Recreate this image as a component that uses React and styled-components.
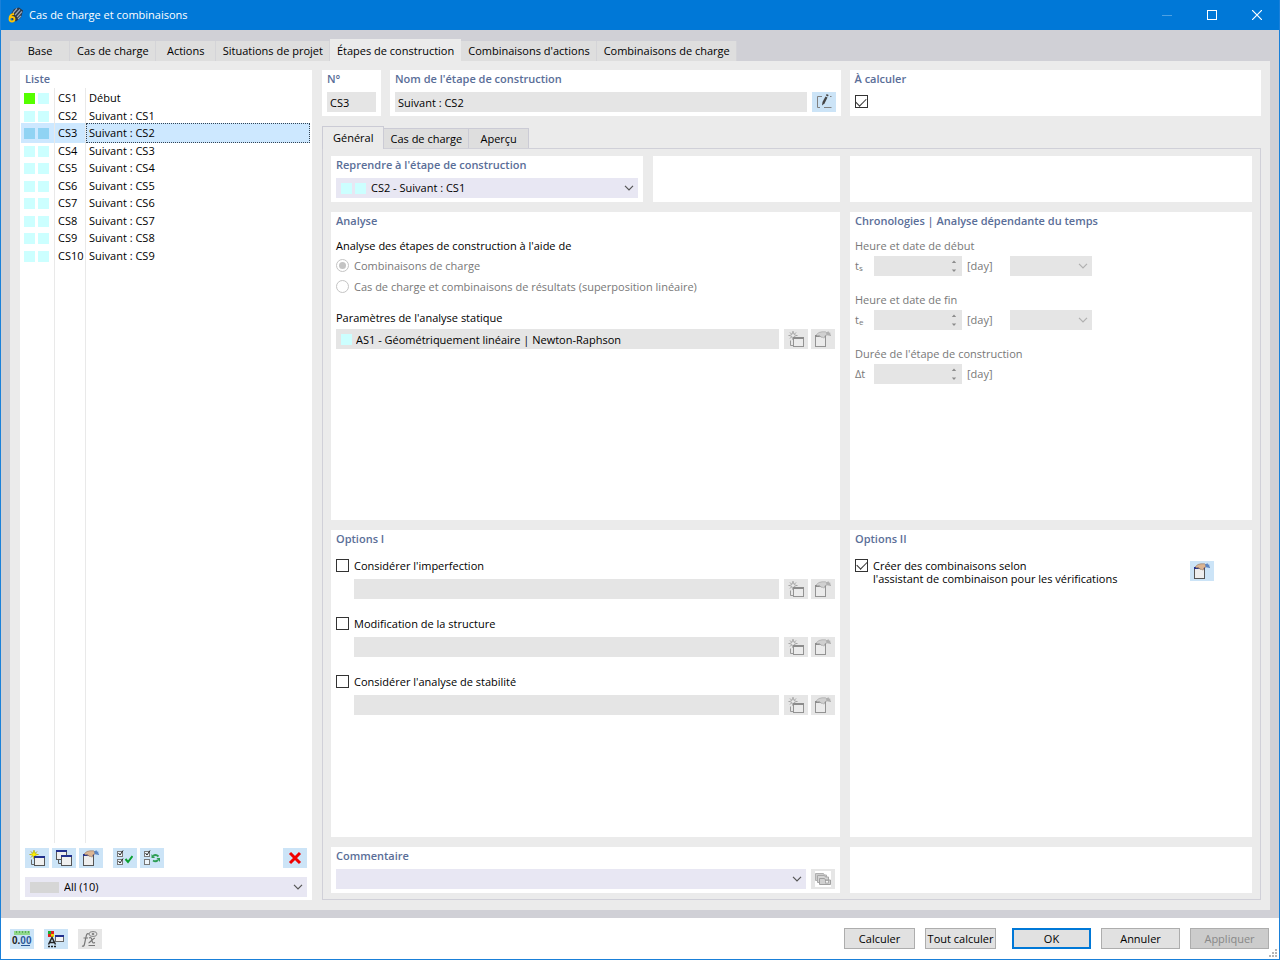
import React, { useState } from "react";
import styled, { createGlobalStyle, css } from "styled-components";

const GlobalStyle = createGlobalStyle`
  * {
    box-sizing: border-box;
  }
  body {
    margin: 0;
    font-family: "Open Sans", "Noto Sans", sans-serif;
    font-size: 11px;
    line-height: 18px;
    color: #000;
    background: #fff;
  }
  button, input, select {
    font: inherit;
    color: inherit;
    margin: 0;
  }
`;

const Window = styled.div`
  display: flex;
  flex-direction: column;
  min-height: 100vh;
  border: 1px solid #1a80d9;
  border-top: 0;
`;

const TitleBar = styled.header`
  display: flex;
  align-items: center;
  gap: 5px;
  height: 30px;
  padding-left: 7px;
  background: #0078d7;
  color: #fff;
`;

const WindowTitle = styled.h1`
  flex: 1;
  margin: 0;
  font-size: 11px;
  font-weight: 400;
`;

const WindowButtons = styled.div`
  display: flex;
`;

const WindowButton = styled.button`
  display: grid;
  place-items: center;
  width: 45px;
  height: 30px;
  padding: 0;
  border: 0;
  background: none;
  opacity: ${(props) => (props.disabled ? 0.3 : 1)};
`;

const Body = styled.main`
  flex: 1;
  display: flex;
  flex-direction: column;
  padding: 9px 9px 8px;
  background: #d0d0d6;
`;

const MainTabs = styled.nav`
  display: flex;
  align-items: flex-end;
  height: 22px;
`;

const MainTab = styled.button`
  height: ${(props) => (props.$active ? 22 : 20)}px;
  min-width: 60px;
  padding: ${(props) => (props.$active ? "2px 7px 0" : "0 7px")};
  border: 0;
  background: ${(props) => (props.$active ? "#ebebeb" : "#dedede")};
  box-shadow: ${(props) => (props.$active ? "none" : "inset -1px 0 #d4d4d8")};
  line-height: 20px;
  white-space: nowrap;
`;

const Content = styled.div`
  flex: 1;
  display: flex;
  gap: 10px;
  padding: 9px 9px 10px 10px;
  background: #ebebeb;
`;

const Card = styled.section`
  display: flex;
  flex-direction: column;
  min-width: 0;
  padding: 0 5px 4px;
  background: #fff;
`;

const Heading = styled.h2`
  margin: 0 0 ${(props) => props.$bottom ?? 4}px;
  font-size: 11px;
  line-height: 18px;
  font-weight: 600;
  color: #5a6e98;
  white-space: nowrap;
`;

const ListCard = styled(Card)`
  flex: 0 0 292px;
  padding: 0 2px 3px 1px;
`;

const ListHeading = styled(Heading)`
  margin: 0 4px;
`;

const List = styled.table`
  flex: 1;
  display: flex;
  flex-direction: column;
  border-spacing: 0;

  tbody {
    flex: 1;
    display: flex;
    flex-direction: column;
  }
`;

const ListRow = styled.tr`
  display: grid;
  grid-template-columns: 34px 31px 1fr;
  height: 18px;
  cursor: default;

  &:nth-child(even) {
    height: 17px;
  }

  td {
    display: flex;
    align-items: center;
    gap: 3px;
    padding: 0 0 0 3px;
    border-right: 1px solid #e9e9e9;
    background: ${(props) => (props.$selected ? "#cde8ff" : "none")};
    white-space: nowrap;
  }

  td:last-child {
    border: 1px dotted ${(props) => (props.$selected ? "#345" : "transparent")};
    padding-left: 2px;
  }
`;

const FillerRow = styled(ListRow)`
  flex: 1;
  &:nth-child(odd) {
    height: auto;
  }
`;

const Swatch = styled.span`
  flex: none;
  width: ${(props) => props.$width || 11}px;
  height: 11px;
  background: ${(props) => props.$color || "#ccffff"};
`;

const ListTools = styled.div`
  display: flex;
  gap: 3px;
  padding: 5px 3px 9px 4px;
`;

const ToolGap = styled.span`
  width: ${(props) => (props.$grow ? "auto" : "4px")};
  flex: ${(props) => (props.$grow ? 1 : "none")};
`;

const IconButton = styled.button`
  flex: none;
  display: grid;
  place-items: center;
  width: 24px;
  height: 20px;
  padding: 0;
  border: 0;
  background: ${(props) => (props.disabled ? "#e6e6e6" : "#cce4f7")};
`;

const SelectBox = styled.div`
  display: flex;
  align-items: center;
  gap: 3px;
  flex: ${(props) => (props.$width ? "none" : 1)};
  width: ${(props) => (props.$width ? props.$width + "px" : "auto")};
  min-width: 0;
  height: 20px;
  padding: 0 4px 0 5px;
  background: ${(props) => (props.$disabled ? "#e5e5e5" : "#e8e7f3")};

  select {
    flex: 1;
    min-width: 0;
    height: 20px;
    padding: 0 0 0 2px;
    border: 0;
    background: none;
    appearance: none;
    opacity: 1;
  }
`;

const FilterRow = styled.div`
  display: flex;
  padding: 0 3px 0 4px;
`;

const Details = styled.div`
  flex: 1;
  display: flex;
  flex-direction: column;
  min-width: 0;
`;

const Summary = styled.div`
  display: grid;
  grid-template-columns: 59px minmax(0, 450fr) minmax(0, 411fr);
  gap: 9px;
`;

const SubTabs = styled.nav`
  display: flex;
  align-items: flex-end;
  height: 22px;
  margin-top: 10px;
`;

const SubTab = styled.button`
  height: ${(props) => (props.$active ? 23 : 20)}px;
  min-width: 60px;
  padding: 0 6px;
  border: 1px solid #cbcbd5;
  border-left-width: ${(props) => (props.$active ? "1px" : "0")};
  border-bottom: 0;
  background: ${(props) => (props.$active ? "#ebebeb" : "#dedede")};
  line-height: 18px;

  ${(props) =>
    props.$active &&
    css`
      z-index: 1;
      margin-bottom: -1px;
      padding: 0 10px;
    `}
`;

const Pane = styled.div`
  flex: 1;
  display: grid;
  grid-template-columns: minmax(0, 509fr) minmax(0, 402fr);
  grid-template-rows: 46px 1fr 1fr 46px;
  gap: 10px;
  padding: 7px 8px 6px;
  border: 1px solid #d0d0d8;
`;

const SplitRow = styled.div`
  display: grid;
  grid-template-columns: minmax(0, 312fr) minmax(0, 187fr);
  gap: 10px;
`;

const Row = styled.div`
  display: flex;
  align-items: center;
  gap: 5px;
`;

const Buttons = styled(Row)`
  gap: 3px;
`;

const TextField = styled.input`
  flex: 1;
  min-width: 0;
  width: 100%;
  height: 20px;
  padding: 0 3px;
  border: 0;
  background: #e5e5e5;
`;

const FieldBox = styled.div`
  flex: 1;
  display: flex;
  align-items: center;
  gap: 1px;
  padding-left: 5px;
  background: #e5e5e5;
`;

const Label = styled.label`
  display: block;
  margin-top: ${(props) => props.$top || 0}px;
  margin-bottom: ${(props) => props.$bottom || 0}px;
  color: ${(props) => (props.$muted ? "#787878" : "inherit")};
`;

const RadioLabel = styled.label`
  display: flex;
  align-items: center;
  gap: 5px;
  height: 21px;
  color: #787878;
`;

const Radio = styled.input.attrs({ type: "radio" })`
  appearance: none;
  display: grid;
  place-items: center;
  width: 13px;
  height: 13px;
  border: 1px solid #c4c4c4;
  border-radius: 50%;

  &:checked::before {
    content: "";
    width: 7px;
    height: 7px;
    border-radius: 50%;
    background: #c4c4c4;
  }
`;

const CheckLabel = styled.label`
  display: flex;
  align-items: flex-start;
  gap: 5px;
  line-height: 13px;
  padding-top: 2px;
`;

const Checkbox = styled.input.attrs({ type: "checkbox" })`
  appearance: none;
  flex: none;
  display: grid;
  place-items: center;
  width: 13px;
  height: 13px;
  border: 1px solid #333;
  background: #fff;

  &:checked::before {
    content: "";
    width: 9px;
    height: 5px;
    border: solid #333;
    border-width: 0 0 1px 1px;
    transform: translateY(-1px) rotate(-45deg);
  }
`;

const Option = styled.div`
  padding-bottom: 16px;
`;

const OptionRow = styled(Row)`
  padding: 7px 0 0 18px;
`;

const CalcCheck = styled.div`
  padding-top: 3px;
  display: flex;
`;

const TimeRow = styled.div`
  display: grid;
  grid-template-columns: 14px 88px 38px 82px;
  align-items: center;
  gap: 5px;
  height: 20px;
  margin: 1px 0 15px;
  color: #787878;

  sub {
    font-size: 8px;
    line-height: 8px;
    vertical-align: -1px;
  }
`;

const SpinBox = styled.div`
  display: flex;
  align-items: center;
  height: 20px;
  padding-right: 5px;
  background: #e5e5e5;
`;

const WizardRow = styled.div`
  display: flex;
  align-items: center;
  justify-content: space-between;
  padding-right: 33px;
`;

const Footer = styled.footer`
  position: relative;
  display: flex;
  align-items: center;
  justify-content: space-between;
  min-height: 41px;
  padding: 0 10px 0 9px;
  background: #fff;
`;

const FooterGroup = styled.div`
  display: flex;
  align-items: center;
  gap: 10px;
`;

const PushButton = styled.button`
  width: ${(props) => (props.$small ? 71 : 79)}px;
  height: 21px;
  padding: 0;
  border: ${(props) => (props.$primary ? "2px solid #0078d7" : "1px solid #adadad")};
  background: ${(props) => (props.disabled ? "#cccccc" : "#e1e1e1")};
  color: ${(props) => (props.disabled ? "#888" : "inherit")};
  line-height: 16px;
  white-space: nowrap;
`;

const MainActions = styled(FooterGroup)`
  padding-left: 6px;
`;

const Grip = styled.svg`
  position: absolute;
  right: 2px;
  bottom: 2px;
`;

/* icons */

const Svg = ({ children, width = 16, height = 16 }) => (
  <svg width={width} height={height} viewBox={`0 0 ${width} ${height}`} fill="none" aria-hidden="true">
    {children}
  </svg>
);

const Chevron = ({ color = "#555" }) => (
  <svg width="10" height="6" viewBox="0 0 10 6" fill="none" aria-hidden="true">
    <path d="M1 .8l4 4 4-4" stroke={color} strokeWidth="1.2" />
  </svg>
);

const AppIcon = () => (
  <Svg>
    <path d="M3 7L6 2l5-1.500 4 3-2 7-5 4-4-2z" fill="#2d3746" />
    <path d="M5 6l4-4.500M7 8l5-5.500M9 10l5-5.500M10 12l3-3" stroke="#97a5b8" strokeWidth="1.2" />
    <path d="M6 7C3 7 1.500 9 1.500 12c0 1.500 1 2.500 2.500 2.500S6.500 13.500 6.500 12 5.500 10 4 10s-2.500 1-2.500 2" stroke="#ffc400" strokeWidth="1.800" />
  </Svg>
);

const NewIcon = ({ off }) => (
  <Svg>
    <path d="M5 0v9M.5 4.500h9M2 1.500l6 6M8 1.500l-6 6" stroke={off ? "#a0a0a0" : "#a79d1c"} />
    <path
      d="M5 .8l1 2.700 2.700 1L6 5.500 5 8.200 4 5.500 1.300 4.500 4 3.500z"
      fill={off ? "#ececec" : "#fff200"}
      stroke={off ? "#a0a0a0" : "#cfc400"}
      strokeWidth=".7"
    />
    <path d="M2.500 9.500v5h3" stroke={off ? "#999" : "#666"} />
    <rect x="5.500" y="6.500" width="10" height="9" fill={off ? "#ebebeb" : "#f0f0f0"} stroke={off ? "#939393" : "#555"} />
    <path d="M5 7h11" stroke={off ? "#8c8c8c" : "#22308e"} strokeWidth="2" />
  </Svg>
);

const CopyIcon = () => (
  <Svg>
    <rect x=".5" y=".5" width="10" height="9" stroke="#555" fill="#eee" />
    <path d="M0 1h11" stroke="#22308e" strokeWidth="2" />
    <path d="M2.500 10v3.500H5" stroke="#555" />
    <rect x="5.500" y="5.500" width="10" height="10" fill="#f0f0f0" stroke="#555" />
    <path d="M5 6h11" stroke="#22308e" strokeWidth="2" />
  </Svg>
);

const EditIcon = ({ off }) => (
  <Svg>
    <rect x=".5" y="4.500" width="10" height="11" fill={off ? "#ebebeb" : "#eee"} stroke={off ? "#939393" : "#555"} />
    <path d="M0 5h11" stroke={off ? "#8c8c8c" : "#22308e"} strokeWidth="2" />
    <path
      d="M1.500 3.500L4 1.500 7 .8h3.500L12 2v2l-2 .8-.5 2-1.200.2-.6-.8-1.200.3-.5-1-1.200.3-.4-1.300-2 .5z"
      fill={off ? "#d0d0d0" : "#dcb592"}
      stroke={off ? "#a0a0a0" : "#8d7460"}
      strokeWidth=".6"
    />
    <path d="M11 1.500L13.500.3 14 1.500l1.500.3-.5 1.700h1V5l-4-.7z" fill={off ? "#b0b0b0" : "#5b86c4"} />
  </Svg>
);

const SmallCheck = ({ y, ticked }) => (
  <g transform={`translate(0 ${y})`}>
    <rect x=".5" y="1.500" width="5" height="5" stroke="#777" fill="#eef6fc" />
    {ticked && <path d="M1.500 3l1.500 2L6 .5" stroke="#222" />}
  </g>
);

const CheckAllIcon = () => (
  <Svg>
    <SmallCheck y={0} ticked />
    <SmallCheck y={8} ticked />
    <path d="M8.500 9l2.500 3 4.500-6" stroke="#0aa030" strokeWidth="2" />
  </Svg>
);

const InvertIcon = () => (
  <Svg>
    <SmallCheck y={0} ticked />
    <SmallCheck y={8} />
    <path d="M9 6c2-1.500 4-1 5.500.5M14 10c-1.500 1.500-3.500 1.500-5 .5" stroke="#2f9e55" strokeWidth="1.800" />
    <path d="M7.500 4v4h3.500zM16 12V8h-3.500z" fill="#2f9e55" />
  </Svg>
);

const DeleteIcon = () => (
  <Svg>
    <path d="M3 3l10 10M13 3L3 13" stroke="#f00000" strokeWidth="3" />
  </Svg>
);

const RenameIcon = () => (
  <Svg>
    <path d="M6 2.500H1.500v11H4M8 13.500h7.500M14 2.500h1.500" stroke="#808080" />
    <path d="M6.500 8L9.500 2.500l2 1-3 6-2.500 2z" fill="#444" />
    <path d="M10 1.500l2 1 .6-1.500-2-1z" fill="#444" />
  </Svg>
);

const LibraryIcon = () => (
  <Svg>
    <rect width="16" height="16" fill="#fff" />
    <path d="M.5 9.500v-7h8l1 1.500h2v5.500z" fill="#ccc" stroke="#b0b0b0" />
    <path d="M2.500 11.500v-7h7l1 1.500h3v5.500z" fill="#d4d4d4" stroke="#a8a8a8" />
    <path d="M4.500 13.500v-6h5l1 1.500h5v4.500z" fill="#d0d0d0" stroke="#a0a0a0" />
    <rect x="10.500" y="9.500" width="3" height="2.500" fill="#f4f4f4" stroke="#999" strokeWidth=".7" />
  </Svg>
);

const UnitsIcon = () => (
  <Svg width={20} height={18}>
    <rect x="2" y="1" width="16" height="4" fill="#8fd88a" />
    <path d="M4.500 1v2M7.500 1v2M10.500 1v2M13.500 1v2M16.500 1v2" stroke="#5cab5c" />
    <text x="0" y="14" fontSize="10" fontWeight="700" fontFamily="Liberation Sans, sans-serif" fill="#222">
      0.<tspan fill="#2b5797">00</tspan>
    </text>
    <path d="M9 15.500h9" stroke="#2b5797" />
  </Svg>
);

const DisplayIcon = () => (
  <Svg width={18} height={18}>
    <rect x="1" y="1" width="3" height="3" fill="#18b030" />
    <rect x="4" y="1" width="3" height="3" fill="#e02020" />
    <rect x="1" y="4" width="3" height="3" fill="#e02020" />
    <rect x="4" y="4" width="3" height="3" fill="#f0d000" />
    <path d="M1.500 14.500L5 7.500l3.500 7M3 12.500h4" stroke="#222" strokeWidth="1.500" />
    <path d="M1 16.500h8" stroke="#222" strokeWidth="1.500" strokeDasharray="2 1" />
    <rect x="8.500" y="6.500" width="8" height="5" fill="#f4f4f4" stroke="#666" />
    <path d="M8 6h9" stroke="#22308e" strokeWidth="2" />
  </Svg>
);

const FormulaIcon = () => (
  <Svg width={18} height={18}>
    <path d="M8 4c-2-1-2.500.5-3 3L3.500 14c-.4 2-1 2.500-2.500 2M2.500 8H7" stroke="#777" strokeWidth="1.200" />
    <path d="M8 8c2-1 2.500 0 3 2.500s1 3 3 2M14 8c-2 0-5 5-6.500 5M7.500 15.500H14" stroke="#777" strokeWidth="1.200" />
    <ellipse cx="12" cy="4" rx="4" ry="2.500" stroke="#888" />
    <circle cx="12" cy="4" r="1.300" fill="#888" />
  </Svg>
);

const SpinArrows = () => (
  <Svg width={6} height={12}>
    <path d="M.8 3L3 .5 5.200 3zM.8 9.500L3 12l2.200-2.500z" fill="#8c8c8c" />
  </Svg>
);

const mainTabs = [
  "Base",
  "Cas de charge",
  "Actions",
  "Situations de projet",
  "Étapes de construction",
  "Combinaisons d'actions",
  "Combinaisons de charge",
];

const stages = Array.from({ length: 10 }, (_, i) => ({
  id: `CS${i + 1}`,
  name: i === 0 ? "Début" : `Suivant : CS${i}`,
}));

const options = ["Considérer l'imperfection", "Modification de la structure", "Considérer l'analyse de stabilité"];

const NewEditButtons = () => (
  <Buttons>
    <IconButton disabled aria-label="Nouveau">
      <NewIcon off />
    </IconButton>
    <IconButton disabled aria-label="Modifier">
      <EditIcon off />
    </IconButton>
  </Buttons>
);

function TimeField({ id, label, symbol, sub, withDate }) {
  return (
    <>
      <Label htmlFor={id} $muted>
        {label}
      </Label>
      <TimeRow>
        <span>
          {symbol}
          {sub && <sub>{sub}</sub>}
        </span>
        <SpinBox>
          <TextField id={id} disabled />
          <SpinArrows />
        </SpinBox>
        <span>[day]</span>
        {withDate && (
          <SelectBox $width={82} $disabled>
            <select disabled aria-label={label} />
            <Chevron color="#b0b0b0" />
          </SelectBox>
        )}
      </TimeRow>
    </>
  );
}

function StageList({ selected, onSelect }) {
  return (
    <ListCard>
      <ListHeading>Liste</ListHeading>
      <List>
        <tbody>
          {stages.map((stage, i) => {
            const active = i === selected;
            const color = active ? "#90d3f3" : "#ccffff";
            return (
              <ListRow key={stage.id} $selected={active} onClick={() => onSelect(i)}>
                <td>
                  <Swatch $color={i === 0 ? "#55ff00" : color} />
                  <Swatch $color={color} />
                </td>
                <td>{stage.id}</td>
                <td>{stage.name}</td>
              </ListRow>
            );
          })}
          <FillerRow>
            <td />
            <td />
            <td />
          </FillerRow>
        </tbody>
      </List>
      <ListTools>
        <IconButton aria-label="Nouveau">
          <NewIcon />
        </IconButton>
        <IconButton aria-label="Copier">
          <CopyIcon />
        </IconButton>
        <IconButton aria-label="Modifier">
          <EditIcon />
        </IconButton>
        <ToolGap />
        <IconButton aria-label="Tout sélectionner">
          <CheckAllIcon />
        </IconButton>
        <IconButton aria-label="Inverser la sélection">
          <InvertIcon />
        </IconButton>
        <ToolGap $grow />
        <IconButton aria-label="Supprimer">
          <DeleteIcon />
        </IconButton>
      </ListTools>
      <FilterRow>
        <SelectBox>
          <Swatch $width={29} $color="#d6d6d6" />
          <select aria-label="Filtre">
            <option>All (10)</option>
          </select>
          <Chevron />
        </SelectBox>
      </FilterRow>
    </ListCard>
  );
}

export default function App() {
  const [tab, setTab] = useState(4);
  const [selected, setSelected] = useState(2);
  const stage = stages[selected];

  return (
    <Window>
      <GlobalStyle />
      <TitleBar>
        <AppIcon />
        <WindowTitle>Cas de charge et combinaisons</WindowTitle>
        <WindowButtons>
          <WindowButton disabled aria-label="Réduire">
            <Svg width={10} height={10}>
              <path d="M0 5.500h10" stroke="#fff" />
            </Svg>
          </WindowButton>
          <WindowButton aria-label="Agrandir">
            <Svg width={10} height={10}>
              <rect x=".5" y=".5" width="9" height="9" stroke="#fff" />
            </Svg>
          </WindowButton>
          <WindowButton aria-label="Fermer">
            <Svg width={10} height={10}>
              <path d="M0 0l10 10M10 0L0 10" stroke="#fff" strokeWidth="1.200" />
            </Svg>
          </WindowButton>
        </WindowButtons>
      </TitleBar>

      <Body>
        <MainTabs>
          {mainTabs.map((name, i) => (
            <MainTab key={name} $active={i === tab} onClick={() => setTab(i)}>
              {name}
            </MainTab>
          ))}
        </MainTabs>
        <Content>
          <StageList selected={selected} onSelect={setSelected} />
          <Details>
            <Summary>
              <Card>
                <Heading as="label" htmlFor="number">
                  N°
                </Heading>
                <TextField id="number" value={stage.id} readOnly />
              </Card>
              <Card>
                <Heading as="label" htmlFor="name">
                  Nom de l'étape de construction
                </Heading>
                <Row>
                  <TextField id="name" value={stage.name} readOnly />
                  <IconButton aria-label="Renommer">
                    <RenameIcon />
                  </IconButton>
                </Row>
              </Card>
              <Card>
                <Heading as="label" htmlFor="calculate">
                  À calculer
                </Heading>
                <CalcCheck>
                  <Checkbox id="calculate" defaultChecked />
                </CalcCheck>
              </Card>
            </Summary>

            <SubTabs>
              <SubTab $active>Général</SubTab>
              <SubTab>Cas de charge</SubTab>
              <SubTab>Aperçu</SubTab>
            </SubTabs>
            <Pane>
              <SplitRow>
                <Card>
                  <Heading as="label" htmlFor="resume">
                    Reprendre à l'étape de construction
                  </Heading>
                  <SelectBox>
                    <Swatch />
                    <Swatch />
                    <select id="resume">
                      <option>CS2 - Suivant : CS1</option>
                    </select>
                    <Chevron />
                  </SelectBox>
                </Card>
                <Card />
              </SplitRow>
              <Card />

              <Card>
                <Heading $bottom={7}>Analyse</Heading>
                <Label as="div">Analyse des étapes de construction à l'aide de</Label>
                <RadioLabel>
                  <Radio name="analysis" disabled defaultChecked />
                  Combinaisons de charge
                </RadioLabel>
                <RadioLabel>
                  <Radio name="analysis" disabled />
                  Cas de charge et combinaisons de résultats (superposition linéaire)
                </RadioLabel>
                <Label htmlFor="static" $top={12} $bottom={2}>
                  Paramètres de l'analyse statique
                </Label>
                <Row>
                  <FieldBox>
                    <Swatch />
                    <TextField id="static" value="AS1 - Géométriquement linéaire | Newton-Raphson" readOnly />
                  </FieldBox>
                  <NewEditButtons />
                </Row>
              </Card>
              <Card>
                <Heading $bottom={7}>Chronologies | Analyse dépendante du temps</Heading>
                <TimeField id="start" label="Heure et date de début" symbol="t" sub="s" withDate />
                <TimeField id="end" label="Heure et date de fin" symbol="t" sub="e" withDate />
                <TimeField id="duration" label="Durée de l'étape de construction" symbol="Δt" />
              </Card>

              <Card>
                <Heading $bottom={9}>Options I</Heading>
                {options.map((name) => (
                  <Option key={name}>
                    <CheckLabel>
                      <Checkbox />
                      {name}
                    </CheckLabel>
                    <OptionRow>
                      <TextField disabled aria-label={name} />
                      <NewEditButtons />
                    </OptionRow>
                  </Option>
                ))}
              </Card>
              <Card>
                <Heading $bottom={9}>Options II</Heading>
                <WizardRow>
                  <CheckLabel>
                    <Checkbox defaultChecked />
                    <span>
                      Créer des combinaisons selon
                      <br />
                      l'assistant de combinaison pour les vérifications
                    </span>
                  </CheckLabel>
                  <IconButton aria-label="Modifier l'assistant">
                    <EditIcon />
                  </IconButton>
                </WizardRow>
              </Card>

              <Card>
                <Heading as="label" htmlFor="comment">
                  Commentaire
                </Heading>
                <Row>
                  <SelectBox>
                    <select id="comment" />
                    <Chevron />
                  </SelectBox>
                  <IconButton disabled aria-label="Bibliothèque">
                    <LibraryIcon />
                  </IconButton>
                </Row>
              </Card>
              <Card />
            </Pane>
          </Details>
        </Content>
      </Body>

      <Footer>
        <FooterGroup>
          <IconButton aria-label="Unités">
            <UnitsIcon />
          </IconButton>
          <IconButton aria-label="Affichage">
            <DisplayIcon />
          </IconButton>
          <IconButton disabled aria-label="Formule">
            <FormulaIcon />
          </IconButton>
        </FooterGroup>
        <FooterGroup>
          <PushButton $small>Calculer</PushButton>
          <PushButton $small>Tout calculer</PushButton>
          <MainActions>
            <PushButton $primary>OK</PushButton>
            <PushButton>Annuler</PushButton>
            <PushButton disabled>Appliquer</PushButton>
          </MainActions>
        </FooterGroup>
        <Grip width="8" height="8" viewBox="0 0 8 8" fill="#b5b5b5">
          <path d="M6 0h2v2H6zM3 3h2v2H3zM6 3h2v2H6zM0 6h2v2H0zM3 6h2v2H3zM6 6h2v2H6z" />
        </Grip>
      </Footer>
    </Window>
  );
}
